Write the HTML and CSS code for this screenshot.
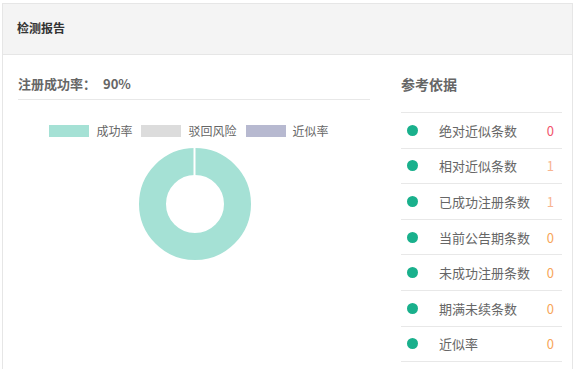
FILE: index.html
```html
<!DOCTYPE html>
<html>
<head>
<meta charset="utf-8">
<title>检测报告</title>
<link rel="stylesheet" href="styles.css">
</head>
<body>
<div class="card">
  <div class="card_header">检测报告</div>
  <div class="card_body">
    <div class="rate_panel">
      <p class="panel_title">注册成功率：<span class="rate_value">90%</span></p>
      <div class="legend">
        <span class="legend_item"><i class="swatch swatch_ok"></i>成功率</span>
        <span class="legend_item"><i class="swatch swatch_reject"></i>驳回风险</span>
        <span class="legend_item"><i class="swatch swatch_similar"></i>近似率</span>
      </div>
      <div class="donut">
        <svg width="112" height="112" viewBox="0 0 112 112">
          <circle cx="56" cy="56" r="42.5" fill="none" stroke="#a5e1d5" stroke-width="27"/>
          <line x1="55.5" y1="0" x2="55.5" y2="28" stroke="#fff" stroke-width="2"/>
        </svg>
      </div>
    </div>
    <div class="basis_panel">
      <p class="panel_title basis_title">参考依据</p>
      <ul class="basis_list">
        <li><i class="dot"></i><span class="basis_name">绝对近似条数</span><span class="basis_num num_red">0</span></li>
        <li><i class="dot"></i><span class="basis_name">相对近似条数</span><span class="basis_num num_peach">1</span></li>
        <li><i class="dot"></i><span class="basis_name">已成功注册条数</span><span class="basis_num num_peach">1</span></li>
        <li><i class="dot"></i><span class="basis_name">当前公告期条数</span><span class="basis_num">0</span></li>
        <li><i class="dot"></i><span class="basis_name">未成功注册条数</span><span class="basis_num">0</span></li>
        <li><i class="dot"></i><span class="basis_name">期满未续条数</span><span class="basis_num">0</span></li>
        <li><i class="dot"></i><span class="basis_name">近似率</span><span class="basis_num">0</span></li>
      </ul>
    </div>
  </div>
</div>
</body>
</html>
```

FILE: styles.css
```css
body{
  margin: 0;
  background-color: #fff;
  font-family: "Microsoft YaHei", "Noto Sans CJK SC", "Noto Sans", sans-serif;
  color: #666;
  overflow: hidden;
}

.card{
  margin: 3px 0 0 2px;
  border: 1px solid #e6e6e6;
  border-bottom: none;
  height: 366px;
  box-sizing: border-box;
}

.card_header{
  height: 50px;
  line-height: 48px;
  padding-left: 14px;
  background-color: #f4f4f4;
  border-bottom: 1px solid #e6e6e6;
  font-size: 12px;
  font-weight: bold;
  color: #333;
}

.card_body{
  display: grid;
  grid-template-columns: 352px 161px;
  column-gap: 31px;
  padding: 19px 0 0 15px;
}

.panel_title{
  margin: 0;
  line-height: 20px;
  padding-bottom: 5px;
  border-bottom: 1px solid #e8e8e8;
  font-size: 13px;
  font-weight: bold;
  color: #666;
}

.rate_value{
  margin-left: 7px;
}

.basis_title{
  font-size: 14px;
  border-bottom: none;
  padding-bottom: 0;
}

.legend{
  display: flex;
  justify-content: center;
  gap: 9px;
  margin: 25px 10px 0 0;
  font-size: 12px;
  line-height: 12px;
}

.legend_item{
  display: flex;
  align-items: center;
}

.swatch{
  display: inline-block;
  width: 40px;
  height: 12px;
  margin-right: 7px;
}
.swatch_ok{ background-color: #a5e1d5; }
.swatch_reject{ background-color: #dcdcdc; }
.swatch_similar{ background-color: #b7b9d0; }

.donut{
  display: flex;
  justify-content: center;
  margin: 11px 0 0 2px;
}
.donut svg{ display: block; }

.basis_list{
  list-style: none;
  margin: 18px 0 0 0;
  padding: 0;
  border-top: 1px solid #e8e8e8;
}

.basis_list li{
  display: flex;
  align-items: center;
  height: 35.6px;
  box-sizing: border-box;
  border-bottom: 1px solid #e8e8e8;
  font-size: 13px;
}

.dot{
  width: 11px;
  height: 11px;
  border-radius: 50%;
  background-color: #19b08c;
  margin: 0 21px 0 6px;
}

.basis_name{
  flex: 1;
  color: #666;
}

.basis_num{
  padding-right: 8px;
  color: #f7a65a;
}
.num_red{ color: #f2546d; }
.num_peach{ color: #f8b58f; }
```
